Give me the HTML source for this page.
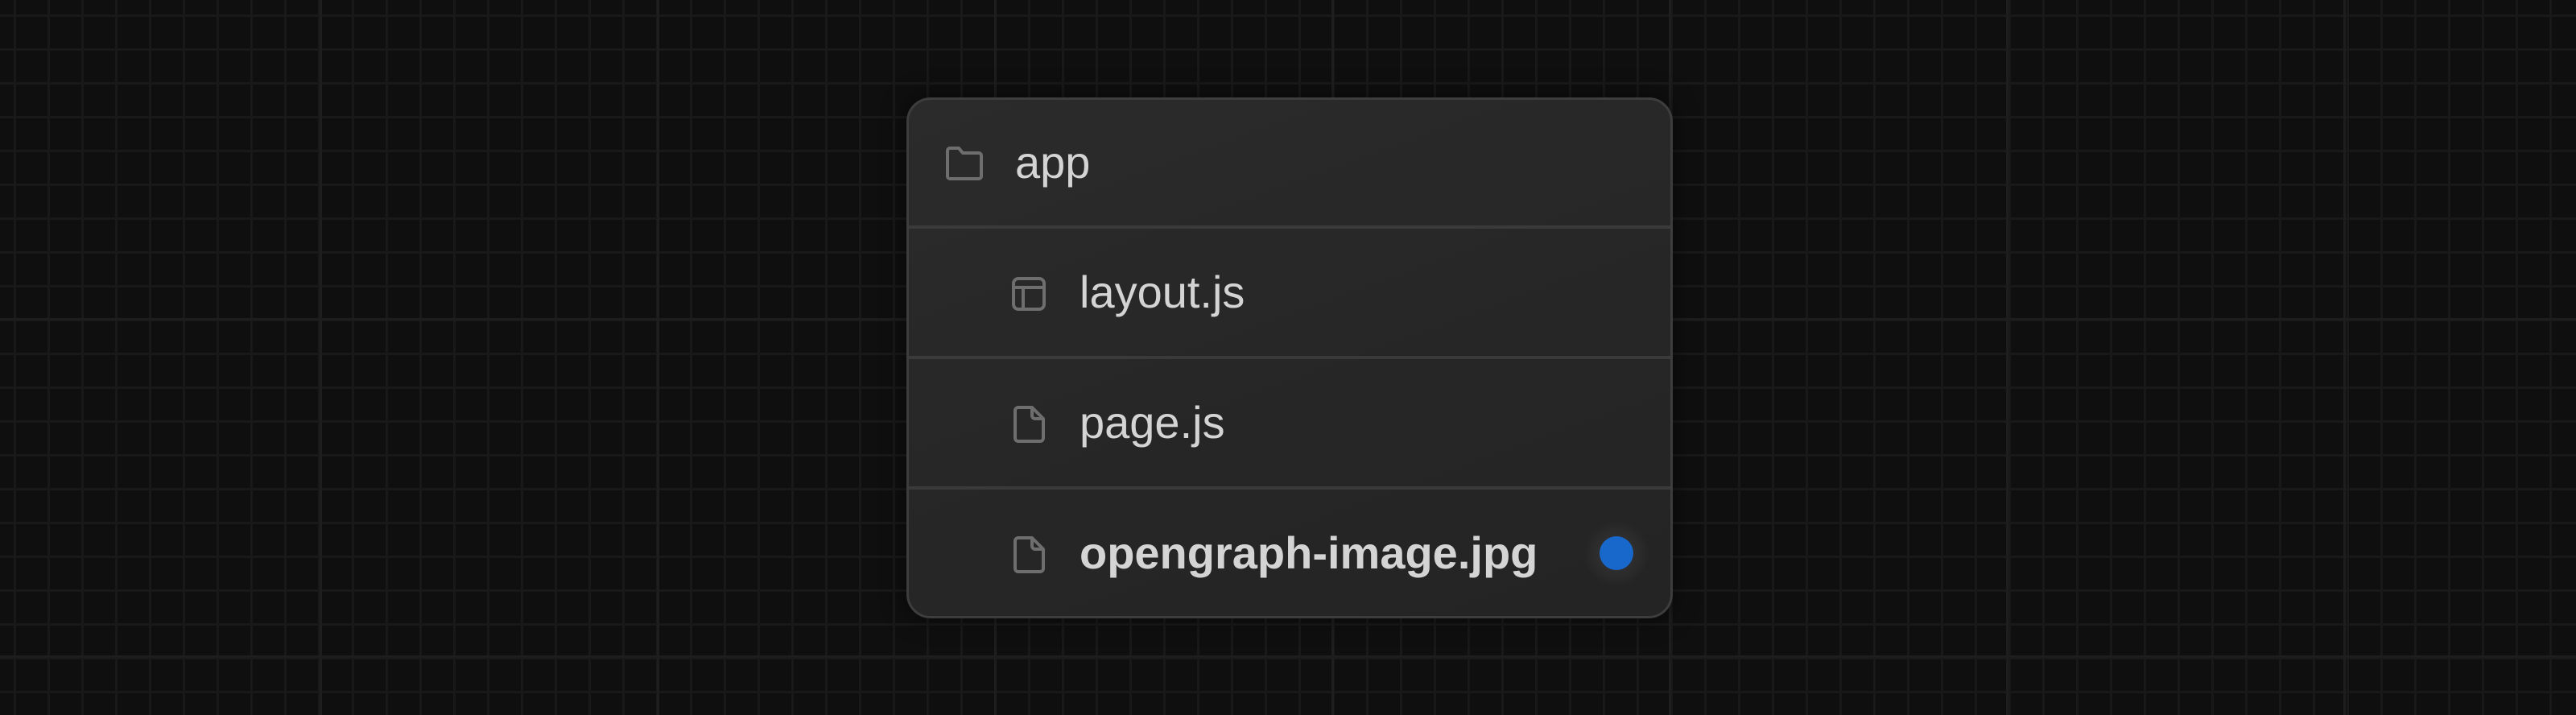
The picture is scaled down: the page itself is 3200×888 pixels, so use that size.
<!DOCTYPE html>
<html><head><meta charset="utf-8"><style>
html,body{margin:0;padding:0;}
body{width:3200px;height:888px;overflow:hidden;position:relative;background-color:#0f0f0f;
background-image:
linear-gradient(to right, #1e1e1e 3px, transparent 3px),
linear-gradient(to bottom, #1e1e1e 3px, transparent 3px),
linear-gradient(to right, #191919 3px, transparent 3px),
linear-gradient(to bottom, #191919 3px, transparent 3px);
background-size:419px 100%,100% 419px,42px 100%,100% 42px;
background-position:397px 0,0 395px,17px 0,0 18px;
font-family:"Liberation Sans",sans-serif;}
.card{position:absolute;left:1126px;top:121px;width:946px;height:641px;border:3px solid #3d3d3d;border-radius:30px;
background:linear-gradient(160deg,#2b2b2b,#262626 60%,#242424);overflow:hidden;box-shadow:0 0 30px rgba(0,0,0,.5);}
.div{position:absolute;left:0;right:0;height:4px;background:#3a3a3a;}
.t{position:absolute;color:#d4d4d4;font-size:56px;line-height:1;}
svg{position:absolute;}
</style></head><body>
<div class="card">
  <div class="div" style="top:156px"></div>
  <div class="div" style="top:318px"></div>
  <div class="div" style="top:480px"></div>

  <svg style="left:46px;top:58px" width="46" height="42" viewBox="0 0 46 42"><path d="M5 2h11l5 6h20a3 3 0 0 1 3 3v26a3 3 0 0 1-3 3H5a3 3 0 0 1-3-3V5a3 3 0 0 1 3-3z" fill="none" stroke="#6e6e6e" stroke-width="4" stroke-linejoin="round"/></svg>
  <div class="t" style="left:132px;top:50px">app</div>

  <svg style="left:128px;top:220px" width="42" height="42" viewBox="0 0 42 42"><rect x="2" y="2" width="38" height="38" rx="6" fill="none" stroke="#6e6e6e" stroke-width="4"/><path d="M2 13h38M14 13v27" stroke="#6e6e6e" stroke-width="4" fill="none"/></svg>
  <div class="t" style="left:212px;top:211px">layout.js</div>

  <svg style="left:130px;top:380px" width="40" height="46" viewBox="0 0 40 46"><path d="M6 2h17l14 14v24a4 4 0 0 1-4 4H6a4 4 0 0 1-4-4V6a4 4 0 0 1 4-4z" fill="none" stroke="#6e6e6e" stroke-width="4" stroke-linejoin="round"/><path d="M23 2v10a4 4 0 0 0 4 4h10" fill="none" stroke="#6e6e6e" stroke-width="4" stroke-linejoin="round"/></svg>
  <div class="t" style="left:212px;top:373px">page.js</div>

  <svg style="left:130px;top:542px" width="40" height="46" viewBox="0 0 40 46"><path d="M6 2h17l14 14v24a4 4 0 0 1-4 4H6a4 4 0 0 1-4-4V6a4 4 0 0 1 4-4z" fill="none" stroke="#6e6e6e" stroke-width="4" stroke-linejoin="round"/><path d="M23 2v10a4 4 0 0 0 4 4h10" fill="none" stroke="#6e6e6e" stroke-width="4" stroke-linejoin="round"/></svg>
  <div class="t" style="left:212px;top:535px;font-weight:bold;letter-spacing:0px">opengraph-image.jpg</div>

  <div style="position:absolute;left:839px;top:523px;width:80px;height:80px;border-radius:50%;background:radial-gradient(circle,#353535 0%,rgba(48,48,48,0.6) 50%,rgba(40,40,40,0) 72%)"></div>
  <div style="position:absolute;left:858px;top:542px;width:42px;height:42px;border-radius:50%;background:#1868cc"></div>
</div>
</body></html>
